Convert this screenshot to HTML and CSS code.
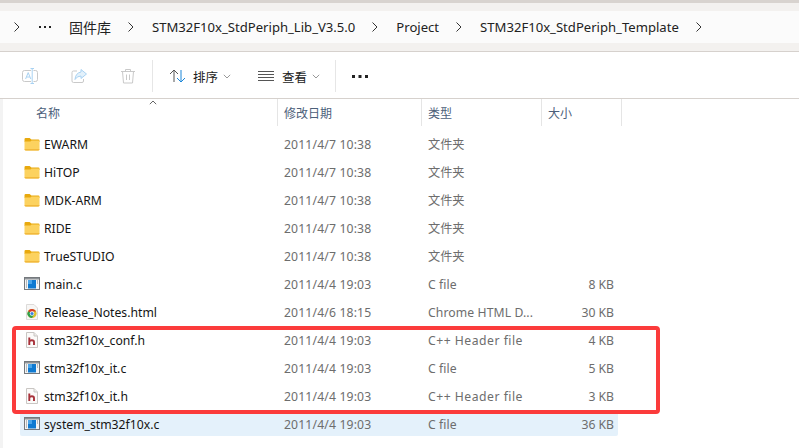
FILE: index.html
```html
<!DOCTYPE html>
<html lang="zh">
<head>
<meta charset="utf-8">
<title>STM32F10x_StdPeriph_Template</title>
<link rel="stylesheet" href="styles.css">
</head>
<body>
<svg class="defs" width="0" height="0" aria-hidden="true">
  <defs>
    <symbol id="folder" viewBox="0 0 16 14">
      <path d="M0.5 2.2Q0.5 1 1.7 1H5.6L7.4 2.6H14.3Q15.5 2.6 15.5 3.8V5H0.5Z" fill="#e8a90e"/>
      <path d="M0.5 4.6L6.4 4.6L7.6 3.6H14.3Q15.5 3.6 15.5 4.8V12.2Q15.5 13.4 14.3 13.4H1.7Q0.5 13.4 0.5 12.2Z" fill="#fcd25f"/>
      <path d="M0.5 12.2V12.6Q0.5 13.4 1.7 13.4H14.3Q15.5 13.4 15.5 12.6V12.2Z" fill="#eeb132"/>
    </symbol>
    <symbol id="cfile" viewBox="0 0 16 14">
      <rect x="0.5" y="0.5" width="15" height="12" fill="#f4f4f4" stroke="#75797d"/>
      <rect x="1" y="1" width="14" height="1.5" fill="#8c9196"/>
      <rect x="4" y="3" width="8" height="8.5" fill="#0f7ad1"/>
      <rect x="4" y="3" width="4" height="4" fill="#4aa5ea"/>
      <path d="M2 4H3M2 6H3M2 8H3M2 10H3M13 4H14M13 6H14" stroke="#7d8185"/>
    </symbol>
    <symbol id="hfile" viewBox="0 0 14 16">
      <path d="M1.5 0.5H9L12.5 4V15.5H1.5Z" fill="#fbfaf9" stroke="#c9c6c3"/>
      <path d="M9 0.5V4H12.5" fill="#ecebe9" stroke="#c9c6c3"/>
      <path d="M4.3 5.5V13M4.3 9.4Q5.2 8.2 6.8 8.2Q9 8.2 9 10V13" fill="none" stroke="#a8323a" stroke-width="1.9"/>
    </symbol>
    <symbol id="chrome" viewBox="0 0 14 16">
      <path d="M1.5 0.5H9L12.5 4V15.5H1.5Z" fill="#f7f6f5" stroke="#dddbd9"/>
      <circle cx="7" cy="9.5" r="4.6" fill="#ddc030"/>
      <path d="M7 9.5L3 7.2A4.6 4.6 0 0 1 11.1 7.4H7Z" fill="#d8382c"/>
      <path d="M7 9.5L3 7.2A4.6 4.6 0 0 0 7 14.1L9.2 10Z" fill="#2f9e4e"/>
      <circle cx="7" cy="9.5" r="2.2" fill="#fff"/>
      <circle cx="7" cy="9.5" r="1.6" fill="#3a80e0"/>
    </symbol>
    <symbol id="chev" viewBox="0 0 8 12">
      <path d="M1.5 1.5L6 6L1.5 10.5" fill="none" stroke="currentColor" stroke-width="1"/>
    </symbol>
    <symbol id="down" viewBox="0 0 8 5">
      <path d="M0.8 0.8L4 4L7.2 0.8" fill="none" stroke="currentColor" stroke-width="1"/>
    </symbol>
  </defs>
</svg>

<div class="window">
  <div class="topstrip"></div>
  <nav class="crumbs">
    <svg class="chev first"><use href="#chev"/></svg>
    <svg class="dots" viewBox="0 0 12 2" width="12" height="2"><path d="M0 0H2V2H0ZM5 0H7V2H5ZM10 0H12V2H10Z" fill="#222"/></svg>
    <span class="crumb cn">固件库</span>
    <svg class="chev"><use href="#chev"/></svg>
    <span class="crumb">STM32F10x_StdPeriph_Lib_V3.5.0</span>
    <svg class="chev"><use href="#chev"/></svg>
    <span class="crumb">Project</span>
    <svg class="chev"><use href="#chev"/></svg>
    <span class="crumb">STM32F10x_StdPeriph_Template</span>
    <svg class="chev"><use href="#chev"/></svg>
  </nav>

  <div class="toolbar">
    <div class="tool-group">
      <svg class="tool-icon" viewBox="0 0 16 16" width="16" height="16">
        <rect x="0.5" y="2.5" width="15" height="11" rx="2" fill="none" stroke="#c9c9c9"/>
        <rect x="9" y="1" width="2.5" height="14" fill="#fff"/>
        <path d="M3.6 11L6.2 4.6L8.8 11M4.6 9H7.8" fill="none" stroke="#a9d2f2"/>
        <path d="M8.5 0.5H12M10.2 0.5V15.5M8.5 15.5H12" fill="none" stroke="#a9d2f2"/>
      </svg>
      <svg class="tool-icon" viewBox="0 0 16 16" width="16" height="16">
        <path d="M6 3H2.5Q1 3 1 4.5V13Q1 14.5 2.5 14.5H11Q12.5 14.5 12.5 13V11" fill="none" stroke="#c9c9c9"/>
        <path d="M10 1.5L15.5 6L10 10.5V8Q6 8 4 11.5Q4.5 5 10 4Z" fill="#e3f1fb" stroke="#a9d2f2"/>
      </svg>
      <svg class="tool-icon" viewBox="0 0 16 16" width="16" height="16">
        <path d="M1 3.5H15M5.5 3.5V1.5H10.5V3.5M2.5 3.5L3.5 15H12.5L13.5 3.5M6.5 6.5V12M9.5 6.5V12" fill="none" stroke="#c9c9c9"/>
      </svg>
    </div>
    <div class="tool-sep"></div>
    <div class="tool-btn sort">
      <svg viewBox="0 0 17 14" width="17" height="14">
        <path d="M5 13V1M1 5L5 1L9 5" fill="none" stroke="#555"/>
        <path d="M12 1V13M8 9L12 13L16 9" fill="none" stroke="#1a86d8"/>
      </svg>
      <span class="tool-label">排序</span>
      <svg class="down"><use href="#down"/></svg>
    </div>
    <div class="tool-btn view">
      <svg viewBox="0 0 16 10" width="16" height="10">
        <path d="M0 0.5H16M0 3.5H16M0 6.5H16M0 9.5H16" stroke="#555"/>
      </svg>
      <span class="tool-label">查看</span>
      <svg class="down"><use href="#down"/></svg>
    </div>
    <div class="tool-sep"></div>
    <svg class="more" viewBox="0 0 16 3" width="16" height="3"><path d="M0 0H3V3H0ZM6.5 0H9.5V3H6.5ZM13 0H16V3H13Z" fill="#222"/></svg>
  </div>

  <div class="content">
    <div class="head">
      <div class="hcell name">名称<svg class="sort-caret" viewBox="0 0 8 5" width="8" height="5"><path d="M0.8 4.2L4 1L7.2 4.2" fill="none" stroke="#666"/></svg></div>
      <div class="hcell">修改日期</div>
      <div class="hcell">类型</div>
      <div class="hcell">大小</div>
    </div>

    <div class="rows">
      <div class="row"><svg class="ic"><use href="#folder"/></svg><span class="fname">EWARM</span><span class="date">2011/4/7 10:38</span><span>文件夹</span><span class="size"></span></div>
      <div class="row"><svg class="ic"><use href="#folder"/></svg><span class="fname">HiTOP</span><span class="date">2011/4/7 10:38</span><span>文件夹</span><span class="size"></span></div>
      <div class="row"><svg class="ic"><use href="#folder"/></svg><span class="fname">MDK-ARM</span><span class="date">2011/4/7 10:38</span><span>文件夹</span><span class="size"></span></div>
      <div class="row"><svg class="ic"><use href="#folder"/></svg><span class="fname">RIDE</span><span class="date">2011/4/7 10:38</span><span>文件夹</span><span class="size"></span></div>
      <div class="row"><svg class="ic"><use href="#folder"/></svg><span class="fname">TrueSTUDIO</span><span class="date">2011/4/7 10:38</span><span>文件夹</span><span class="size"></span></div>
      <div class="row"><svg class="ic"><use href="#cfile"/></svg><span class="fname">main.c</span><span class="date">2011/4/4 19:03</span><span class="type">C file</span><span class="size">8 KB</span></div>
      <div class="row"><svg class="ic tall"><use href="#chrome"/></svg><span class="fname">Release_Notes.html</span><span class="date">2011/4/6 18:15</span><span class="type">Chrome HTML D...</span><span class="size">30 KB</span></div>
      <div class="row"><svg class="ic tall"><use href="#hfile"/></svg><span class="fname">stm32f10x_conf.h</span><span class="date">2011/4/4 19:03</span><span class="type hdr">C++ Header file</span><span class="size">4 KB</span></div>
      <div class="row"><svg class="ic"><use href="#cfile"/></svg><span class="fname">stm32f10x_it.c</span><span class="date">2011/4/4 19:03</span><span class="type">C file</span><span class="size">5 KB</span></div>
      <div class="row"><svg class="ic tall"><use href="#hfile"/></svg><span class="fname">stm32f10x_it.h</span><span class="date">2011/4/4 19:03</span><span class="type hdr">C++ Header file</span><span class="size">3 KB</span></div>
      <div class="row selected"><svg class="ic"><use href="#cfile"/></svg><span class="fname">system_stm32f10x.c</span><span class="date">2011/4/4 19:03</span><span class="type">C file</span><span class="size">36 KB</span></div>
    </div>
    <div class="callout"></div>
  </div>
</div>
</body>
</html>
```

FILE: styles.css
```css
* { box-sizing: border-box; }
html, body { margin: 0; padding: 0; background: #fff; }
body {
  width: 799px;
  height: 448px;
  overflow: hidden;
  font-family: "Noto Sans", "Noto Sans CJK SC", sans-serif;
  color: #1a1a1a;
}
.defs { position: absolute; }
.window { width: 799px; height: 448px; display: flex; flex-direction: column; }
.topstrip { height: 3px; background: #d8d3cf; flex: none; }
.crumbs {
  flex: none;
  height: 48px;
  padding: 8px 0;
  background: #f3f1ef;
  display: flex;
  align-items: center;
  font-size: 13.1px;
  position: relative;
}
.crumbs::before {
  content: "";
  position: absolute;
  left: 0; right: 0; top: 8px; height: 32px;
  background: #fbfbfb;
}
.crumbs > * { position: relative; }
.chev { width: 8px; height: 12px; flex: none; color: #333; margin: 0 17px 0 16px; }
.chev.first { margin: 0 0 0 13px; }
.dots { margin: 0 0 0 18px; flex: none; }
.crumb { white-space: nowrap; color: #222; }
.crumb.cn { margin-left: 18px; font-size: 14px; }
.toolbar {
  flex: none;
  height: 48px;
  padding-top: 2px;
  border-top: 1px solid #d6d1cd;
  border-bottom: 1px solid #d6d1cd;
  display: flex;
  align-items: center;
  background: #fff;
}
.tool-group { display: flex; align-items: center; gap: 33px; margin-left: 22px; width: 130px; }
.tool-icon { flex: none; }
.tool-sep { width: 1px; height: 32px; background: #e6e6e6; flex: none; }
.tool-btn { display: flex; align-items: center; color: #222; flex: none; }
.tool-btn.sort { margin-left: 16px; width: 89px; }
.tool-btn.view { width: 77px; }
.tool-label { font-size: 12.5px; margin-left: 7px; width: 25px; white-space: nowrap; }
.view .tool-label { margin-left: 8px; }
.down { width: 8px; height: 5px; margin-left: 5px; color: #999; flex: none; }
.more { margin-left: 16px; flex: none; }
.content { flex: 1; position: relative; border-left: 3px solid #f3f3f3; }
.head {
  display: grid;
  grid-template-columns: 275px 144px 120px 80px;
  height: 27px;
}
.hcell {
  font-size: 12px;
  color: #4c607a;
  padding-left: 6px;
  padding-top: 5px;
  border-right: 1px solid #e5e5e5;
  position: relative;
  white-space: nowrap;
}
.hcell.name { padding-left: 33px; }
.sort-caret { position: absolute; left: 146px; top: 1px; }
.rows { display: flex; flex-direction: column; gap: 4px; padding: 6px 0 0 17px; }
.row {
  width: 598px;
  height: 24px;
  display: grid;
  grid-template-columns: 24px 240px 144px 120px 1fr;
  align-items: center;
  font-size: 12.2px;
  color: #6d6d6d;
  white-space: nowrap;
}
.row.selected { background: #e4f1fb; border-radius: 2px; }
.ic { width: 16px; height: 14px; margin-left: 4px; }
.ic.tall { width: 14px; height: 16px; margin-left: 5px; }
.fname { color: #141414; }
.date { letter-spacing: 0.15px; }
.type { letter-spacing: 0.1px; }
.type.hdr { letter-spacing: 0.5px; }
.size { text-align: right; padding-right: 4px; }
.callout {
  position: absolute;
  left: 9px;
  top: 227px;
  width: 648px;
  height: 88px;
  border: 4px solid #fb3b3b;
  border-radius: 4px;
}
```
